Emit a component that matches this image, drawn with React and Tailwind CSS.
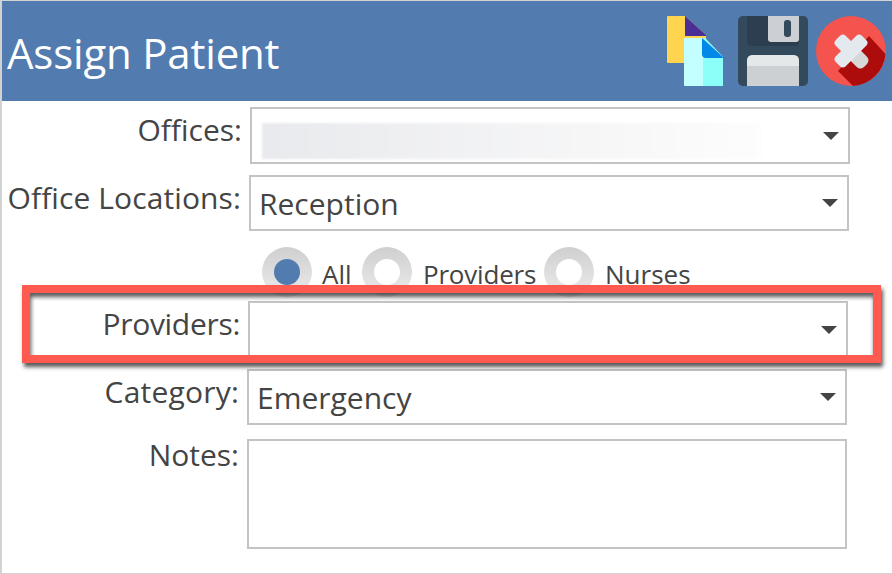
const font = { fontFamily: '"Open Sans", "Noto Sans", sans-serif' };

function Arrow() {
  return (
    <svg width="16" height="8" viewBox="0 0 16 8" className="shrink-0">
      <path d="M0 0H16L8 8Z" fill="#444444" />
    </svg>
  );
}

function FilesIcon() {
  return (
    <svg width="56" height="70" viewBox="0 0 56 70">
      <path d="M1 0H18L39 19V47H1Q0 47 0 46V1Q0 0 1 0Z" fill="#ffd54f" />
      <path d="M18 0L39 19V20H18Z" fill="#4a2f96" />
      <path d="M18 22H38L56 41V69Q56 70 55 70H18Q17 70 17 69V23Q17 22 18 22Z" fill="#c4ffff" />
      <path d="M36 22H38L56 41V70H36Z" fill="#8cfff8" />
      <path d="M35 22L56 41V42H39Q35 42 35 38Z" fill="#0288e8" />
    </svg>
  );
}

function SaveIcon() {
  return (
    <svg width="70" height="70" viewBox="0 0 70 70">
      <rect width="70" height="70" rx="5" fill="#33495c" />
      <path d="M9 0H61V26Q61 30 57 30H13Q9 30 9 26Z" fill="#2c3e50" />
      <path d="M30 0H61V23Q61 26 58 26H33Q30 26 30 23Z" fill="#ccd0d4" />
      <rect x="46" y="4" width="7" height="17" rx="3" fill="#33495c" />
      <path d="M9 70V45Q9 39 15 39H55Q61 39 61 45V70Z" fill="#ccd0d3" />
      <path d="M9 50V45Q9 39 15 39H55Q61 39 61 45V50Z" fill="#e4e8e9" />
    </svg>
  );
}

function CloseIcon() {
  return (
    <svg width="70" height="70" viewBox="0 0 70 70">
      <circle cx="35" cy="35" r="35" fill="#f4544d" />
      <path d="M53 20L69.500 38A35 35 0 0 1 37 70L22 55Z" fill="#ad0c0c" />
      <rect x="16.500" y="28" width="37" height="14" rx="4" fill="#e4e8ef" transform="rotate(45 35 35)" />
      <rect x="16.500" y="28" width="37" height="14" rx="4" fill="#e4e8ef" transform="rotate(-45 35 35)" />
      <path d="M35 45L45 35L51 41Q54 44 51 48L48 51Q44 54 41 51Z" fill="#d6d8d8" />
    </svg>
  );
}

function Radio({ checked }) {
  return (
    <span className="flex w-[50px] h-[50px] shrink-0 items-center justify-center rounded-full bg-gradient-to-b from-[#cfcfcf] to-[#ececec]">
      <span className={`block w-[26px] h-[26px] rounded-full ${checked ? "bg-[#527bb0]" : "bg-white"}`} />
    </span>
  );
}

export default function App() {
  return (
    <div
      className="w-[892px] h-[574px] overflow-hidden relative bg-white text-[#444444] border-l-2 border-t border-b border-[#d2d2d2]"
      style={font}
    >
      <div className="h-[100px] bg-[#527bb0] flex items-start justify-between pl-[5px] pr-[6px]">
        <h1 className="text-white text-[42px] leading-[104px] tracking-[-0.2px]">Assign Patient</h1>
        <div className="flex items-start pt-[15px]">
          <FilesIcon />
          <div className="ml-[15px]">
            <SaveIcon />
          </div>
          <div className="ml-2">
            <CloseIcon />
          </div>
        </div>
      </div>

      {/* Offices */}
      <div className="flex pt-[6px] h-[74px] text-[30px]">
        <label className="w-[240px] text-right leading-[46px]">Offices:</label>
        <div className="ml-2 w-[600px] h-[57px] border-2 border-[#c4c4c4] flex items-center justify-between pl-[10px] pr-[9px]">
          <div className="w-[500px] h-9 mt-[10px] blur-[1px] bg-gradient-to-r from-[#e9eaed] to-[#fdfdfd]" />
          <Arrow />
        </div>
      </div>

      {/* Office Locations */}
      <div className="flex h-[72px] text-[30px]">
        <label className="w-[239px] text-right leading-[46px] tracking-[0.1px] whitespace-nowrap">Office Locations:</label>
        <div className="ml-2 w-[600px] h-[56px] border-2 border-[#c4c4c4] flex items-center justify-between pl-2 pr-[9px]">
          <span>Reception</span>
          <Arrow />
        </div>
      </div>

      {/* radios */}
      <div className="flex items-start h-[54px] pl-[260px] text-[26px]">
        <Radio checked />
        <span className="ml-[10px] w-[40px] leading-[54px]">All</span>
        <Radio />
        <span className="ml-[11px] w-[121px] leading-[54px] tracking-[-0.2px]">Providers</span>
        <Radio />
        <span className="ml-[11px] leading-[54px]">Nurses</span>
      </div>

      {/* Providers */}
      <div className="flex h-[68px] text-[30px]">
        <label className="w-[238px] text-right leading-[46px] tracking-[-0.3px]">Providers:</label>
        <div className="ml-2 w-[600px] h-[57px] border-2 border-[#c4c4c4] flex items-center justify-end pr-[9px]">
          <Arrow />
        </div>
      </div>

      {/* Category */}
      <div className="flex h-[70px] text-[30px]">
        <label className="w-[237px] text-right leading-[46px] tracking-[0.2px]">Category:</label>
        <div className="ml-2 w-[600px] h-[56px] border-2 border-[#c4c4c4] flex items-center justify-between pl-2 pr-[9px]">
          <span>Emergency</span>
          <Arrow />
        </div>
      </div>

      {/* Notes */}
      <div className="flex text-[30px]">
        <label className="w-[237px] text-right leading-[32px]">Notes:</label>
        <div className="ml-2 w-[600px] h-[110px] border-2 border-[#c4c4c4]" />
      </div>

      {/* highlight annotation over the Providers row */}
      <div className="absolute left-[20px] top-[284px] w-[859px] h-[78px] border-[8px] border-[#ff5a4f] shadow-[2px_4px_4px_rgba(0,0,0,0.65),inset_1px_4px_4px_rgba(0,0,0,0.65)]" />
    </div>
  );
}
